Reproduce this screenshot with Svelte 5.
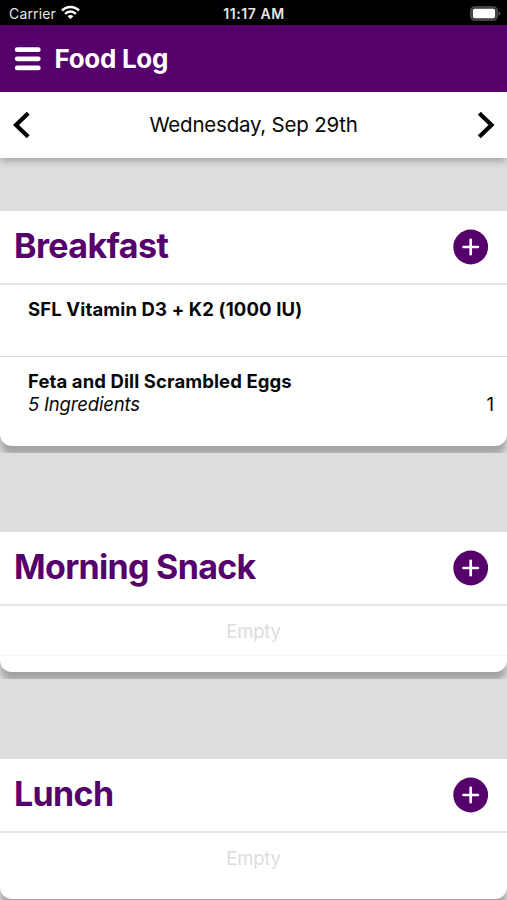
<script>
  const meals = [
    {
      name: 'Breakfast',
      spacing: -0.6,
      items: [
        { name: 'SFL Vitamin D3 + K2 (1000 IU)', detail: '', amount: '', spacing: 0.13 },
        { name: 'Feta and Dill Scrambled Eggs', detail: '5 Ingredients', amount: '1', spacing: 0.1 }
      ]
    },
    { name: 'Morning Snack', spacing: -0.7, items: [] },
    { name: 'Lunch', spacing: -0.65, items: [] }
  ];
</script>

<div class="screen">
  <div class="status">
    <div class="carrier">
      <span>Carrier</span>
      <svg width="19" height="15" viewBox="0 0 19 15" fill="none" stroke="#fff" stroke-width="2.5">
        <path d="M1 5.5C5.8 .7 13.2 .7 18 5.5" />
        <path d="M4.1 8.8C7.2 5.8 11.8 5.8 14.9 8.8" />
        <path d="M6.6 11.2C8.3 9.6 10.7 9.6 12.4 11.2L9.5 14.1Z" fill="#fff" stroke="none" />
      </svg>
    </div>
    <span class="time">11:17 AM</span>
    <svg class="battery" width="31" height="15" viewBox="0 0 31 15">
      <rect x=".8" y=".8" width="26.4" height="13.4" rx="4" fill="#333" stroke="#555" stroke-width="1.3" />
      <rect x="2.9" y="2.7" width="22.2" height="9.6" rx="1.8" fill="#fff" />
      <path d="M28.6 5.2Q30.4 6 30.4 7.5T28.6 9.8Z" fill="#606060" />
    </svg>
  </div>

  <header class="bar">
    <svg width="27" height="26" viewBox="0 0 27 26" stroke="#fff" stroke-width="4.8" stroke-linecap="round">
      <path d="M3.2 3.7H24.3M3.2 12.8H24.3M3.2 21.9H24.3" />
    </svg>
    <h1>Food Log</h1>
  </header>

  <nav class="day">
    <svg width="18" height="28" viewBox="0 0 18 28" fill="none" stroke="#000" stroke-width="4.2">
      <path d="M16.2 2.2L4 14L16.2 25.8" />
    </svg>
    <span>Wednesday, Sep 29th</span>
    <svg width="18" height="28" viewBox="0 0 18 28" fill="none" stroke="#000" stroke-width="4.2">
      <path d="M2.3 2.2L14.5 14L2.3 25.8" />
    </svg>
  </nav>

  <main>
    {#each meals as meal}
      <div class="wrap">
        <section class="card">
          <div class="head">
            <h2 style:letter-spacing="{meal.spacing}px">{meal.name}</h2>
            <svg width="36" height="36" viewBox="0 0 36 36">
              <circle cx="17.7" cy="18" r="17.4" fill="#56006b" />
              <path d="M17.7 10.8V25.2M10.5 18H24.9" stroke="#fff" stroke-width="2.7" stroke-linecap="round" />
            </svg>
          </div>
          {#each meal.items as item}
            <div class="item">
              <div class="name" style:letter-spacing="{item.spacing}px">{item.name}</div>
              {#if item.detail}
                <div class="row"><em>{item.detail}</em><span>{item.amount}</span></div>
              {/if}
            </div>
          {:else}
            <div class="empty">Empty</div>
            <div class="foot"></div>
          {/each}
        </section>
      </div>
    {/each}
  </main>
</div>

<style>
  :global(body) { margin: 0; }
  .screen {
    width: 507px; height: 900px; overflow: hidden; background: #ddd; color: #080808;
    font-family: Inter, "Liberation Sans", sans-serif; display: flex; flex-direction: column;
  }
  .screen * { box-sizing: border-box; }
  svg { display: block; flex: none; }
  h1, h2 { margin: 0; }
  .status {
    height: 25px; flex: none; background: #000; color: #e6e6e6; font-size: 14px; line-height: 27px;
    display: grid; grid-template-columns: 1fr auto 1fr; padding: 0 6px 0 9px;
  }
  .carrier { display: flex; gap: 5px; letter-spacing: 0.15px; }
  .carrier svg { margin-top: 5px; }
  .time { font-weight: 600; letter-spacing: 0.6px; padding-right: 2px; }
  .battery { justify-self: end; margin-top: 6px; }
  .bar {
    height: 67px; flex: none; background: #56006b; color: #fff; display: flex;
    align-items: center; padding: 1px 14px 0; gap: 13.5px; position: relative; z-index: 2;
  }
  h1 { font-size: 26px; line-height: 32px; font-weight: 700; letter-spacing: -0.3px; }
  .day {
    height: 66px; flex: none; background: #fff; display: flex; align-items: center;
    justify-content: space-between; padding: 0 12px; position: relative;
    box-shadow: 0 4px 7px -1px rgba(0, 0, 0, .27); font-size: 20.5px; letter-spacing: -0.22px;
  }
  .day span { margin-top: -1px; }
  main { padding-top: 53px; flex: none; }
  .wrap { overflow: hidden; padding-bottom: 7px; margin-bottom: 80px; }
  .card { background: #fff; border-radius: 0 0 12px 12px; box-shadow: 0 10px 6px -1px rgba(0, 0, 0, .26); }
  .head {
    height: 74px; border-bottom: 2px solid #e6e6e6; display: flex; align-items: center;
    justify-content: space-between; padding: 0 18px 0 14px;
  }
  h2 { color: #56006b; font-size: 34px; line-height: 42px; font-weight: 700; margin-top: -3px; }
  .item { height: 71px; padding: 13px 13px 0 28px; font-size: 18.5px; line-height: 23px; }
  .item + .item { height: 90px; border-top: 1px solid #ddd; }
  .name { font-weight: 700; }
  .row { display: flex; justify-content: space-between; }
  .row em { letter-spacing: -0.18px; }
  .wrap:first-child { margin-bottom: 79px; }
  .empty {
    height: 50px; border-bottom: 1px solid #f8f8f8; text-align: center; font-size: 18.5px;
    line-height: 50px; letter-spacing: -0.2px; color: #ddd;
  }
  .wrap:last-child .empty { border-bottom-color: #fff; }
  .foot { height: 16px; }
</style>
